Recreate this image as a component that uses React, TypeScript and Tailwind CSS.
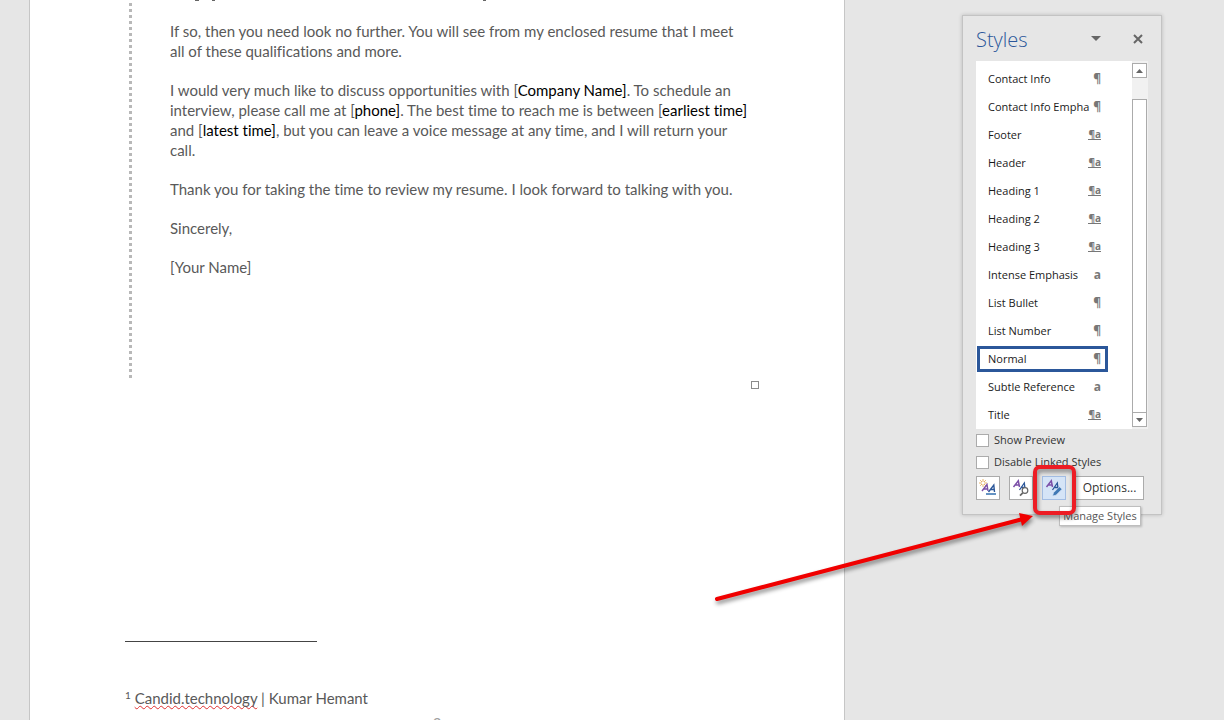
import type { ReactNode } from 'react'

type StyleKind = 'paragraph' | 'linked' | 'character'

interface StyleItem {
  name: string
  kind: StyleKind
}

const STYLES: StyleItem[] = [
  { name: 'Contact Info', kind: 'paragraph' },
  { name: 'Contact Info Empha', kind: 'paragraph' },
  { name: 'Footer', kind: 'linked' },
  { name: 'Header', kind: 'linked' },
  { name: 'Heading 1', kind: 'linked' },
  { name: 'Heading 2', kind: 'linked' },
  { name: 'Heading 3', kind: 'linked' },
  { name: 'Intense Emphasis', kind: 'character' },
  { name: 'List Bullet', kind: 'paragraph' },
  { name: 'List Number', kind: 'paragraph' },
  { name: 'Normal', kind: 'paragraph' },
  { name: 'Subtle Reference', kind: 'character' },
  { name: 'Title', kind: 'linked' },
]

function KindMark({ kind }: { kind: StyleKind }) {
  if (kind === 'linked') {
    return (
      <span className="mb-[2px] border-b border-[#777] text-[10px] leading-[10px] font-bold text-[#777]">¶a</span>
    )
  }
  return (
    <span className="text-[12px] leading-4 font-bold text-[#777]">{kind === 'character' ? 'a' : '¶'}</span>
  )
}

function StyleRow({ item, selected }: { item: StyleItem; selected: boolean }) {
  return (
    <li className="py-px">
      <button
        type="button"
        aria-pressed={selected}
        className={`flex h-[26px] w-full items-center justify-between border-3 pr-1 pl-2 text-[11px] whitespace-nowrap text-[#1a1a1a] ${
          selected ? 'border-[#2b579a]' : 'border-transparent'
        }`}
      >
        {item.name}
        <KindMark kind={item.kind} />
      </button>
    </li>
  )
}

function ScrollBar() {
  return (
    <div className="flex w-4 flex-col bg-[#f1f1f1] py-[2px] pr-px">
      <button type="button" aria-label="Scroll up" className="flex h-[15px] items-center justify-center border border-[#ababab] bg-white">
        <svg width="7" height="4" viewBox="0 0 7 4"><path d="M0 4 3.5 0 7 4Z" fill="#666" /></svg>
      </button>
      <div className="mt-[21px] flex-1 border border-b-0 border-[#ababab] bg-white" />
      <button type="button" aria-label="Scroll down" className="flex h-[15px] items-center justify-center border border-[#ababab] bg-white">
        <svg width="7" height="4" viewBox="0 0 7 4"><path d="M0 0 3.5 4 7 0Z" fill="#666" /></svg>
      </button>
    </div>
  )
}

// The two slanted letters shared by the inspector and manage icons
function Letters() {
  return (
    <>
      <path d="M1.5 8 6.300 1.800 7.500 8M3.500 6h4" stroke="#7b4fa8" strokeWidth="1.5" fill="none" />
      <path d="M7.500 11 12.300 4 13.200 11M9.500 8.500h4" stroke="#2b579a" strokeWidth="1.3" fill="none" />
    </>
  )
}

function NewStyleIcon() {
  return (
    <svg width="18" height="18" viewBox="0 0 18 18">
      <path d="M4 0v8M0 4h8M1.200 1.200l5.600 5.600M6.800 1.200 1.200 6.800" stroke="#e8b36a" strokeWidth="1" />
      <circle cx="4" cy="4" r="1.300" fill="#fff" />
      <path d="M3 12 8 5.500 9 12M5 10h4" stroke="#7b4fa8" strokeWidth="1.4" fill="none" />
      <path d="M9.500 13 14.800 6 15.500 13M11.500 10.500h4" stroke="#2b579a" strokeWidth="1.4" fill="none" />
      <path d="M7 15h10" stroke="#3f78b5" strokeWidth="1.600" />
    </svg>
  )
}

function InspectorIcon() {
  return (
    <svg width="18" height="18" viewBox="0 0 18 18">
      <Letters />
      <circle cx="13" cy="11.500" r="2.800" fill="#fff" stroke="#666" strokeWidth="1.200" />
      <path d="M10.800 13.800 8 16.600" stroke="#666" strokeWidth="1.700" />
    </svg>
  )
}

function ManageIcon() {
  return (
    <svg width="18" height="18" viewBox="0 0 18 18">
      <Letters />
      <path d="M7.500 17 8.500 13.700 14.500 7.700 17 10.200 11 16.200Z" fill="#3f78b5" stroke="#d5e4f7" strokeWidth=".7" />
    </svg>
  )
}

function ToolButton({ label, active = false, children }: { label: string; active?: boolean; children: ReactNode }) {
  return (
    <button
      type="button"
      aria-label={label}
      className={`flex size-6 items-center justify-center border ${
        active ? 'border-[#a3bde3] bg-[#d5e4f7]' : 'border-[#ababab] bg-white'
      }`}
    >
      {children}
    </button>
  )
}

function CheckOption({ label }: { label: string }) {
  return (
    <label className="flex h-[22px] items-center gap-[5px] text-[11px] text-[#333]">
      <input type="checkbox" className="size-[13px] appearance-none border border-[#ababab] bg-white" />
      {label}
    </label>
  )
}

function StylesPane() {
  return (
    <aside className="relative mt-[15px] w-[200px] shrink-0 self-start border border-[#c3c3c3] bg-[#e6e6e6] px-[13px] pb-[14px] font-['Open_Sans','Noto_Sans',sans-serif] shadow-[0_0_4px_rgba(0,0,0,0.2)]">
      <header className="flex h-[45px] items-center">
        <h2 className="flex-1 pt-[2px] text-[20px] font-light text-[#2b579a]">Styles</h2>
        <button type="button" aria-label="Pane options" className="mr-8">
          <svg width="10" height="5" viewBox="0 0 10 5"><path d="M0 0h10L5 5Z" fill="#666" /></svg>
        </button>
        <button type="button" aria-label="Close" className="mr-[5px]">
          <svg width="10" height="10" viewBox="0 0 10 10"><path d="m1 1 8 8M9 1 1 9" stroke="#666" strokeWidth="2" /></svg>
        </button>
      </header>

      <div className="flex justify-between bg-white">
        <ul className="ml-px w-[131px] pt-1">
          {STYLES.map((item) => (
            <StyleRow key={item.name} item={item} selected={item.name === 'Normal'} />
          ))}
        </ul>
        <ScrollBar />
      </div>

      <CheckOption label="Show Preview" />
      <CheckOption label="Disable Linked Styles" />

      <div className="mt-[3px] flex gap-[9px]">
        <ToolButton label="New Style"><NewStyleIcon /></ToolButton>
        <ToolButton label="Style Inspector"><InspectorIcon /></ToolButton>
        <ToolButton label="Manage Styles" active><ManageIcon /></ToolButton>
        <button type="button" className="h-6 w-[69px] border border-[#ababab] bg-white text-[12px] text-[#333]">Options...</button>
      </div>

      <div role="tooltip" className="absolute top-[490px] left-[96px] flex h-5 w-[82px] items-center justify-center border border-[#bebebe] bg-white text-[11px] whitespace-nowrap text-[#575757] shadow-[1px_1px_2px_rgba(0,0,0,0.2)]">
        Manage Styles
      </div>
      <Callout />
    </aside>
  )
}

// Red frame round the Manage Styles button, with the arrow leading to it
function Callout() {
  return (
    <svg className="pointer-events-none absolute top-[443px] left-[-254px] drop-shadow-[1px_3px_2px_rgba(0,0,0,0.45)]" width="376" height="150" viewBox="0 0 376 150" fill="none">
      <rect x="326" y="8" width="39" height="46" rx="5" stroke="#ed1c24" strokeWidth="4" />
      <path d="M8 140 314 60" stroke="#f00000" strokeWidth="4" strokeLinecap="round" />
      <path d="m310 54 14 3-11 10Z" fill="#f00000" />
    </svg>
  )
}

function Field({ children }: { children: ReactNode }) {
  return <span className="text-black">{children}</span>
}

function LetterPage() {
  return (
    <main className="mr-[117px] flex-1 border-x border-[#c6c6c6] bg-white font-['Lato','Carlito',sans-serif] text-[15px] leading-5 text-[#595959] [font-variant-ligatures:none]">
      <div className="ml-[99px] flex h-[378px]">
        <div className="w-[3px] bg-[repeating-linear-gradient(to_bottom,transparent_0px,transparent_3px,#b8b8b8_3px,#b8b8b8_6px)]" />
        <div className="ml-[38px] flex w-[590px] flex-col gap-[19px]">
          {/* Descenders of the line scrolled out above */}
          <svg className="h-[2px] w-full" height="2" viewBox="0 0 590 2" preserveAspectRatio="xMinYMin">
            <path d="M25 0h4v1h-4zM42 0h3v1h-3zM313 0h3v1h-3z" fill="#666" />
          </svg>
          <p>If so, then you need look no further. You will see from my enclosed resume that I meet<br />all of these qualifications and more.</p>
          <p>
            I would very much like to discuss opportunities with [<Field>Company Name]</Field>. To schedule an<br />
            interview, please call me at [<Field>phone]</Field>. The best time to reach me is between [<Field>earliest time]</Field><br />
            and [<Field>latest time]</Field>, but you can leave a voice message at any time, and I will return your<br />
            call.
          </p>
          <p>Thank you for taking the time to review my resume. I look forward to talking with you.</p>
          <p>Sincerely,</p>
          <p>[Your Name]</p>
        </div>
      </div>
      <div className="mt-[3px] mr-[85px] ml-auto size-2 border border-[#8c8c8c]" />

      <footer className="mt-[252px] ml-[95px]">
        <hr className="w-[192px] border-[#444]" />
        <p className="mt-[46px]">
          <sup className="text-[10px]">1</sup>{' '}
          <span className="underline decoration-[#e03030] decoration-wavy decoration-1 underline-offset-1 [text-decoration-skip-ink:none]">Candid.technology</span> | Kumar Hemant
        </p>
      </footer>
      <p className="mt-[5px] text-center text-[#a0a0a0]">2</p>
    </main>
  )
}

export default function App() {
  return (
    <div className="flex h-screen overflow-hidden bg-[#e6e6e6] pr-[62px] pl-[29px]">
      <LetterPage />
      <StylesPane />
    </div>
  )
}
